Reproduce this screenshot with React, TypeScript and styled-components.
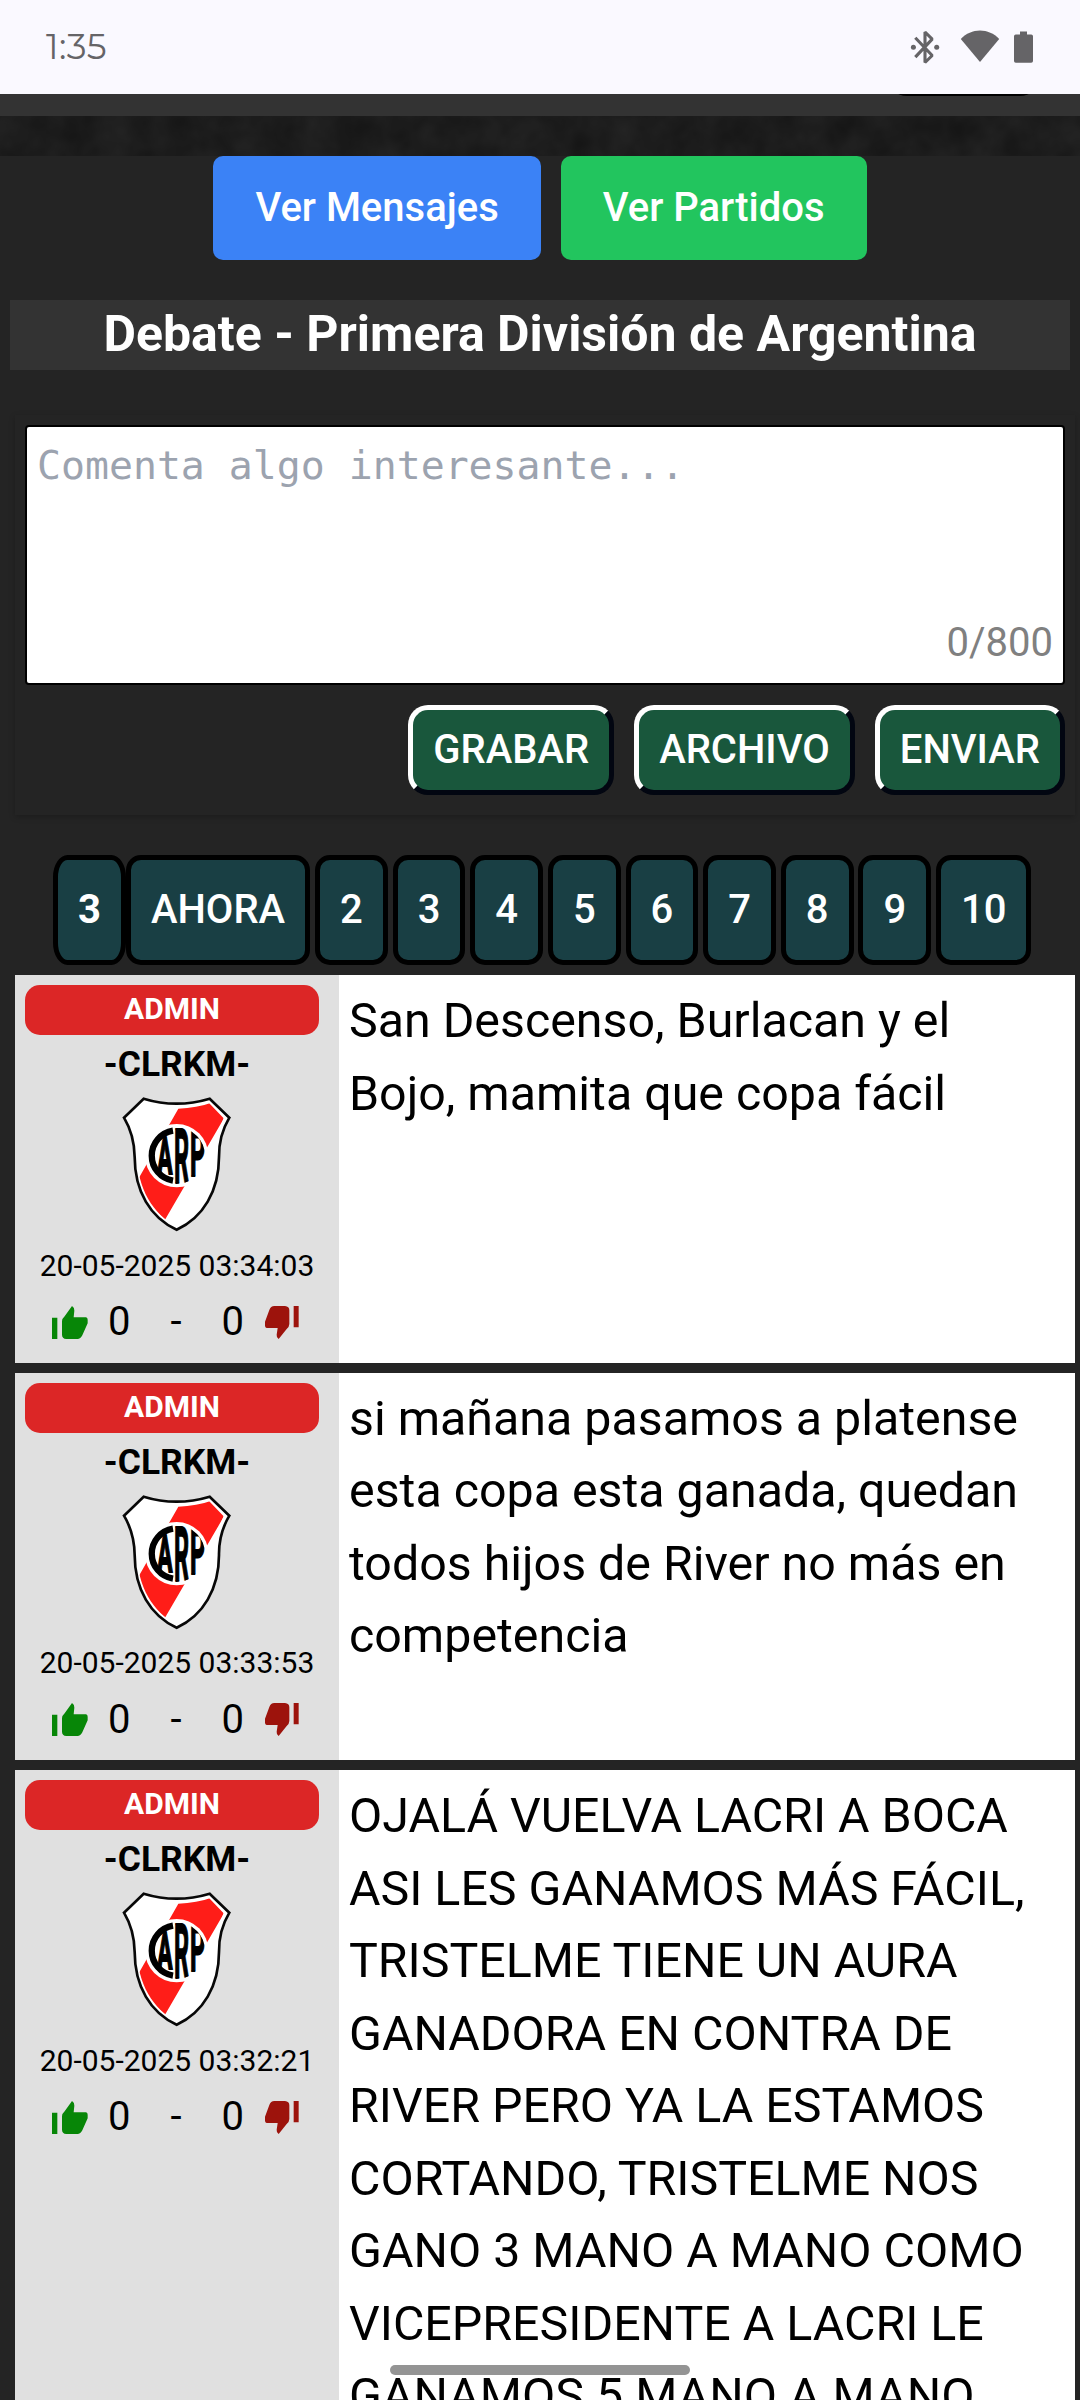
import React from "react";
import styled, { createGlobalStyle, css } from "styled-components";

const GlobalStyle = createGlobalStyle`
  *, *::before, *::after { box-sizing: border-box; }
  html, body { margin: 0; padding: 0; background: #242424; }
  body { font-family: Roboto, "Liberation Sans", sans-serif; font-size: 40px; line-height: 60px; }
  button, textarea { font: inherit; margin: 0; }
`;

const Screen = styled.div`
  position: relative;
  width: 1080px;
  height: 2400px;
  overflow: hidden;
  display: flex;
  flex-direction: column;
  background: #242424;
`;

const StatusBar = styled.header`
  flex: none;
  height: 94px;
  padding: 0 47px 0 46px;
  display: flex;
  align-items: center;
  justify-content: space-between;
  background: #faf9ff;
  color: #656467;
`;

const Clock = styled.span`
  font-family: Montserrat, Inter, sans-serif;
  font-size: 35px;
  font-weight: 400;
  letter-spacing: 0.4px;
  line-height: 92px;
`;

const StatusIcons = styled.div`
  display: flex;
  align-items: center;
  svg { display: block; }
`;

const NavEdge = styled.div`
  flex: none;
  height: 22px;
  padding-right: 40px;
  overflow: hidden;
  display: flex;
  justify-content: flex-end;
  background: #333333;
`;

const NavButtonEdge = styled.div`
  width: 153px;
  height: 42px;
  margin-top: -40px;
  border-radius: 20px;
  background: #000;
`;

const Texture = styled.svg`
  flex: none;
  display: block;
  width: 1080px;
  height: 40px;
`;

const Tabs = styled.nav`
  flex: none;
  display: flex;
  justify-content: center;
  gap: 20px;
`;

const Tab = styled.button<{ $color: string }>`
  height: 104px;
  padding: 0 42px;
  border: 0;
  border-radius: 10px;
  background: ${(p) => p.$color};
  color: #fff;
  font-weight: 500;
`;

const Title = styled.h1`
  flex: none;
  margin: 40px 10px 0;
  height: 70px;
  background: #333333;
  color: #fff;
  font-size: 50px;
  font-weight: 700;
  line-height: 69px;
  text-align: center;
`;

const Composer = styled.form`
  flex: none;
  margin: 45px 5px 0 15px;
  height: 400px;
  padding: 10px;
  display: flex;
  flex-direction: column;
  gap: 20px;
  box-shadow: 0 2px 6px rgba(0, 0, 0, 0.22);
`;

const Field = styled.div`
  position: relative;
  height: 260px;
`;

const CommentInput = styled.textarea`
  display: block;
  width: 100%;
  height: 260px;
  padding: 9px 10px;
  border: 2px solid #000;
  border-radius: 4px;
  background: #fff;
  resize: none;
  outline: none;
  font-family: "Droid Sans Mono", "DejaVu Sans Mono", monospace;
  font-size: 39.85px;
  line-height: 58px;
  &::placeholder { color: #9ca3af; opacity: 1; }
`;

const Counter = styled.span`
  position: absolute;
  right: 12px;
  bottom: 12px;
  color: #808080;
`;

const Actions = styled.div`
  display: flex;
  justify-content: flex-end;
  gap: 20px;
`;

const Action = styled.button`
  height: 90px;
  padding: 0 20px;
  border: 5px solid;
  border-color: #fff #020611 #020611 #fff;
  border-radius: 20px;
  background: #19573c;
  color: #fff;
  font-weight: 500;
`;

const Pages = styled.div`
  flex: none;
  margin-top: 40px;
  padding-left: 53px;
  height: 120px;
  display: flex;
  align-items: flex-start;
`;

const Page = styled.button<{ $current?: boolean }>`
  height: 110px;
  padding: 0 20px;
  margin-right: 4.9px;
  border: 5px solid #000;
  border-radius: 15px;
  background: #193f44;
  color: #fff;
  font-weight: 500;
  ${(p) =>
    p.$current &&
    css`
      margin-right: 0;
      border-radius: 20%;
      font-weight: 700;
    `}
`;

const Messages = styled.main`
  flex: none;
  margin: 0 5px 0 15px;
  display: flex;
  flex-direction: column;
  gap: 10px;
`;

const Message = styled.article`
  min-height: 387.5px;
  display: flex;
  background: #fff;
`;

const Author = styled.aside`
  flex: none;
  width: 324px;
  padding-top: 10px;
  display: flex;
  flex-direction: column;
  align-items: center;
  background: #e0e0e0;
  color: #000;
`;

const Badge = styled.div`
  align-self: flex-start;
  width: 294px;
  height: 50px;
  margin-left: 10px;
  border-radius: 15px;
  background: #dc2626;
  color: #fff;
  font-size: 30px;
  font-weight: 700;
  line-height: 48px;
  text-align: center;
`;

const Name = styled.div`
  font-size: 35.4px;
  font-weight: 700;
  line-height: 59px;
`;

const CrestSvg = styled.svg`
  display: block;
  width: 110px;
  height: 136px;
  margin-top: 2px;
`;

const Stamp = styled.time`
  margin-top: 10.5px;
  font-size: 30px;
  line-height: 45px;
`;

const Votes = styled.div`
  height: 60px;
  margin-top: 4.5px;
  padding-right: 3px;
  display: flex;
  align-items: center;
  justify-content: center;
  gap: 20px;
`;

const Dash = styled.span`
  padding: 0 20px;
`;

const Thumb = styled.svg<{ $down?: boolean }>`
  display: block;
  width: ${(p) => (p.$down ? 34 : 36)}px;
  height: 33px;
  margin-left: ${(p) => (p.$down ? 1 : 0)}px;
  fill: ${(p) => (p.$down ? "#9d130c" : "#078607")};
`;

const Body = styled.p`
  flex: 1;
  margin: 0;
  padding: 10px;
  color: #000;
  font-size: 48.33px;
  line-height: 72.5px;
`;

const HomeIndicator = styled.div`
  position: absolute;
  left: 390px;
  bottom: 25px;
  width: 300px;
  height: 10px;
  border-radius: 5px;
  background: #949494;
`;

function StatusGlyphs() {
  return (
    <StatusIcons>
      <svg width="123" height="34" viewBox="910 29.5 123 34" fill="#656467">
        <circle cx="913.4" cy="46.8" r="2.5" />
        <circle cx="936.7" cy="46.8" r="2.5" />
        <path
          d="M915.3 37.2 L932.2 55 L925 62 V31.5 L932.2 38.6 L915.3 56.6"
          fill="none"
          stroke="#656467"
          strokeWidth="3.1"
          strokeLinejoin="bevel"
        />
        <path d="M960.8 38.4 C966 33 973 30 980 30 C987 30 994 33 999.2 38.4 L980 61.5 Z" />
        <path d="M1020 31h7v3h4.2a1.8 1.8 0 0 1 1.8 1.8V60.4a1.8 1.8 0 0 1 -1.8 1.8H1015.8a1.8 1.8 0 0 1 -1.8 -1.8V35.8a1.8 1.8 0 0 1 1.8 -1.8H1020z" />
      </svg>
    </StatusIcons>
  );
}

const CrestLetter = styled.text`
  font-family: Roboto, sans-serif;
  font-weight: 700;
  fill: #000;
  stroke: #000;
  stroke-width: 6px;
`;

function Crest() {
  return (
    <CrestSvg viewBox="37 33 330 408">
      <defs>
        <clipPath id="shield-inner">
          <path d="M104 50 Q200 72 298 54 L342 100 Q318 148 319 214 C319 310 272 388 201 425 C130 388 83 310 83 214 Q83 148 56 100 Z" />
        </clipPath>
        <clipPath id="disc">
          <circle cx="201" cy="212" r="85" />
        </clipPath>
      </defs>
      <path
        d="M102 41 Q200 71 300 41 L359 98 Q327 152 328 216 C328 318 280 398 201 434 C122 398 75 318 75 216 Q74 150 43 98 Z"
        fill="#fff"
        stroke="#080808"
        strokeWidth="8"
      />
      <g clipPath="url(#shield-inner)">
        <path d="M206 71 Q260 70 310 52 L350 88 L166 404 L70 310 Z" fill="#ff1d18" />
      </g>
      <circle cx="201" cy="212" r="95" fill="#fff" />
      <path d="M190 137 A76 76 0 0 0 190 287" fill="none" stroke="#000" strokeWidth="19" />
      <g clipPath="url(#disc)">
        <CrestLetter transform="translate(143 266) scale(0.43 1)" fontSize="158">A</CrestLetter>
        <CrestLetter transform="translate(193 294) scale(0.31 1)" fontSize="228">R</CrestLetter>
        <CrestLetter transform="translate(241 274) scale(0.37 1)" fontSize="194">P</CrestLetter>
      </g>
    </CrestSvg>
  );
}

interface Post {
  time: string;
  text: string;
}

const posts: Post[] = [
  { time: "20-05-2025 03:34:03", text: "San Descenso, Burlacan y el Bojo, mamita que copa fácil" },
  {
    time: "20-05-2025 03:33:53",
    text: "si mañana pasamos a platense esta copa esta ganada, quedan todos hijos de River no más en competencia",
  },
  {
    time: "20-05-2025 03:32:21",
    text: "OJALÁ VUELVA LACRI A BOCA ASI LES GANAMOS MÁS FÁCIL, TRISTELME TIENE UN AURA GANADORA EN CONTRA DE RIVER PERO YA LA ESTAMOS CORTANDO, TRISTELME NOS GANO 3 MANO A MANO COMO VICEPRESIDENTE A LACRI LE GANAMOS 5 MANO A MANO",
  },
];

function MessageCard({ post }: { post: Post }) {
  return (
    <Message>
      <Author>
        <Badge>ADMIN</Badge>
        <Name>-CLRKM-</Name>
        <Crest />
        <Stamp>{post.time}</Stamp>
        <Votes>
          <Thumb viewBox="0 0 108 99">
            <path d="M0 35H16V99H0Z M30 46Q30 38 38 31L60 0Q68 5 67 14L65 34H102Q107 35 107 41V52L91 88Q86 99 76 99H43Q30 98 30 86Z" />
          </Thumb>
          <span>0</span>
          <Dash>-</Dash>
          <span>0</span>
          <Thumb $down viewBox="0 0 102 99">
            <path d="M101 64H86V0H101Z M73 54Q73 62 65 69L41 99Q34 95 35 86L38 66H5Q0 65 0 59V47L13 12Q17 0 28 0H60Q73 1 73 13Z" />
          </Thumb>
        </Votes>
      </Author>
      <Body>{post.text}</Body>
    </Message>
  );
}

export default function App() {
  return (
    <>
      <GlobalStyle />
      <Screen>
        <StatusBar>
          <Clock>1:35</Clock>
          <StatusGlyphs />
        </StatusBar>
        <NavEdge>
          <NavButtonEdge />
        </NavEdge>
        <Texture viewBox="0 0 1080 40">
          <filter id="stone" x="0" y="0" width="100%" height="100%" colorInterpolationFilters="sRGB">
            <feTurbulence type="fractalNoise" baseFrequency="0.03" numOctaves="3" seed="4" />
            <feColorMatrix values="0.07 0 0 0 0.076  0.07 0 0 0 0.076  0.07 0 0 0 0.076  0 0 0 0 1" />
          </filter>
          <rect width="1080" height="40" filter="url(#stone)" />
        </Texture>
        <Tabs>
          <Tab $color="#3b82f6">Ver Mensajes</Tab>
          <Tab $color="#22c55e">Ver Partidos</Tab>
        </Tabs>
        <Title>Debate - Primera División de Argentina</Title>
        <Composer>
          <Field>
            <CommentInput placeholder="Comenta algo interesante..." />
            <Counter>0/800</Counter>
          </Field>
          <Actions>
            <Action type="button">GRABAR</Action>
            <Action type="button">ARCHIVO</Action>
            <Action type="button">ENVIAR</Action>
          </Actions>
        </Composer>
        <Pages>
          <Page $current>3</Page>
          {["AHORA", "2", "3", "4", "5", "6", "7", "8", "9", "10"].map((label) => (
            <Page key={label}>{label}</Page>
          ))}
        </Pages>
        <Messages>
          {posts.map((post) => (
            <MessageCard key={post.time} post={post} />
          ))}
        </Messages>
        <HomeIndicator />
      </Screen>
    </>
  );
}
